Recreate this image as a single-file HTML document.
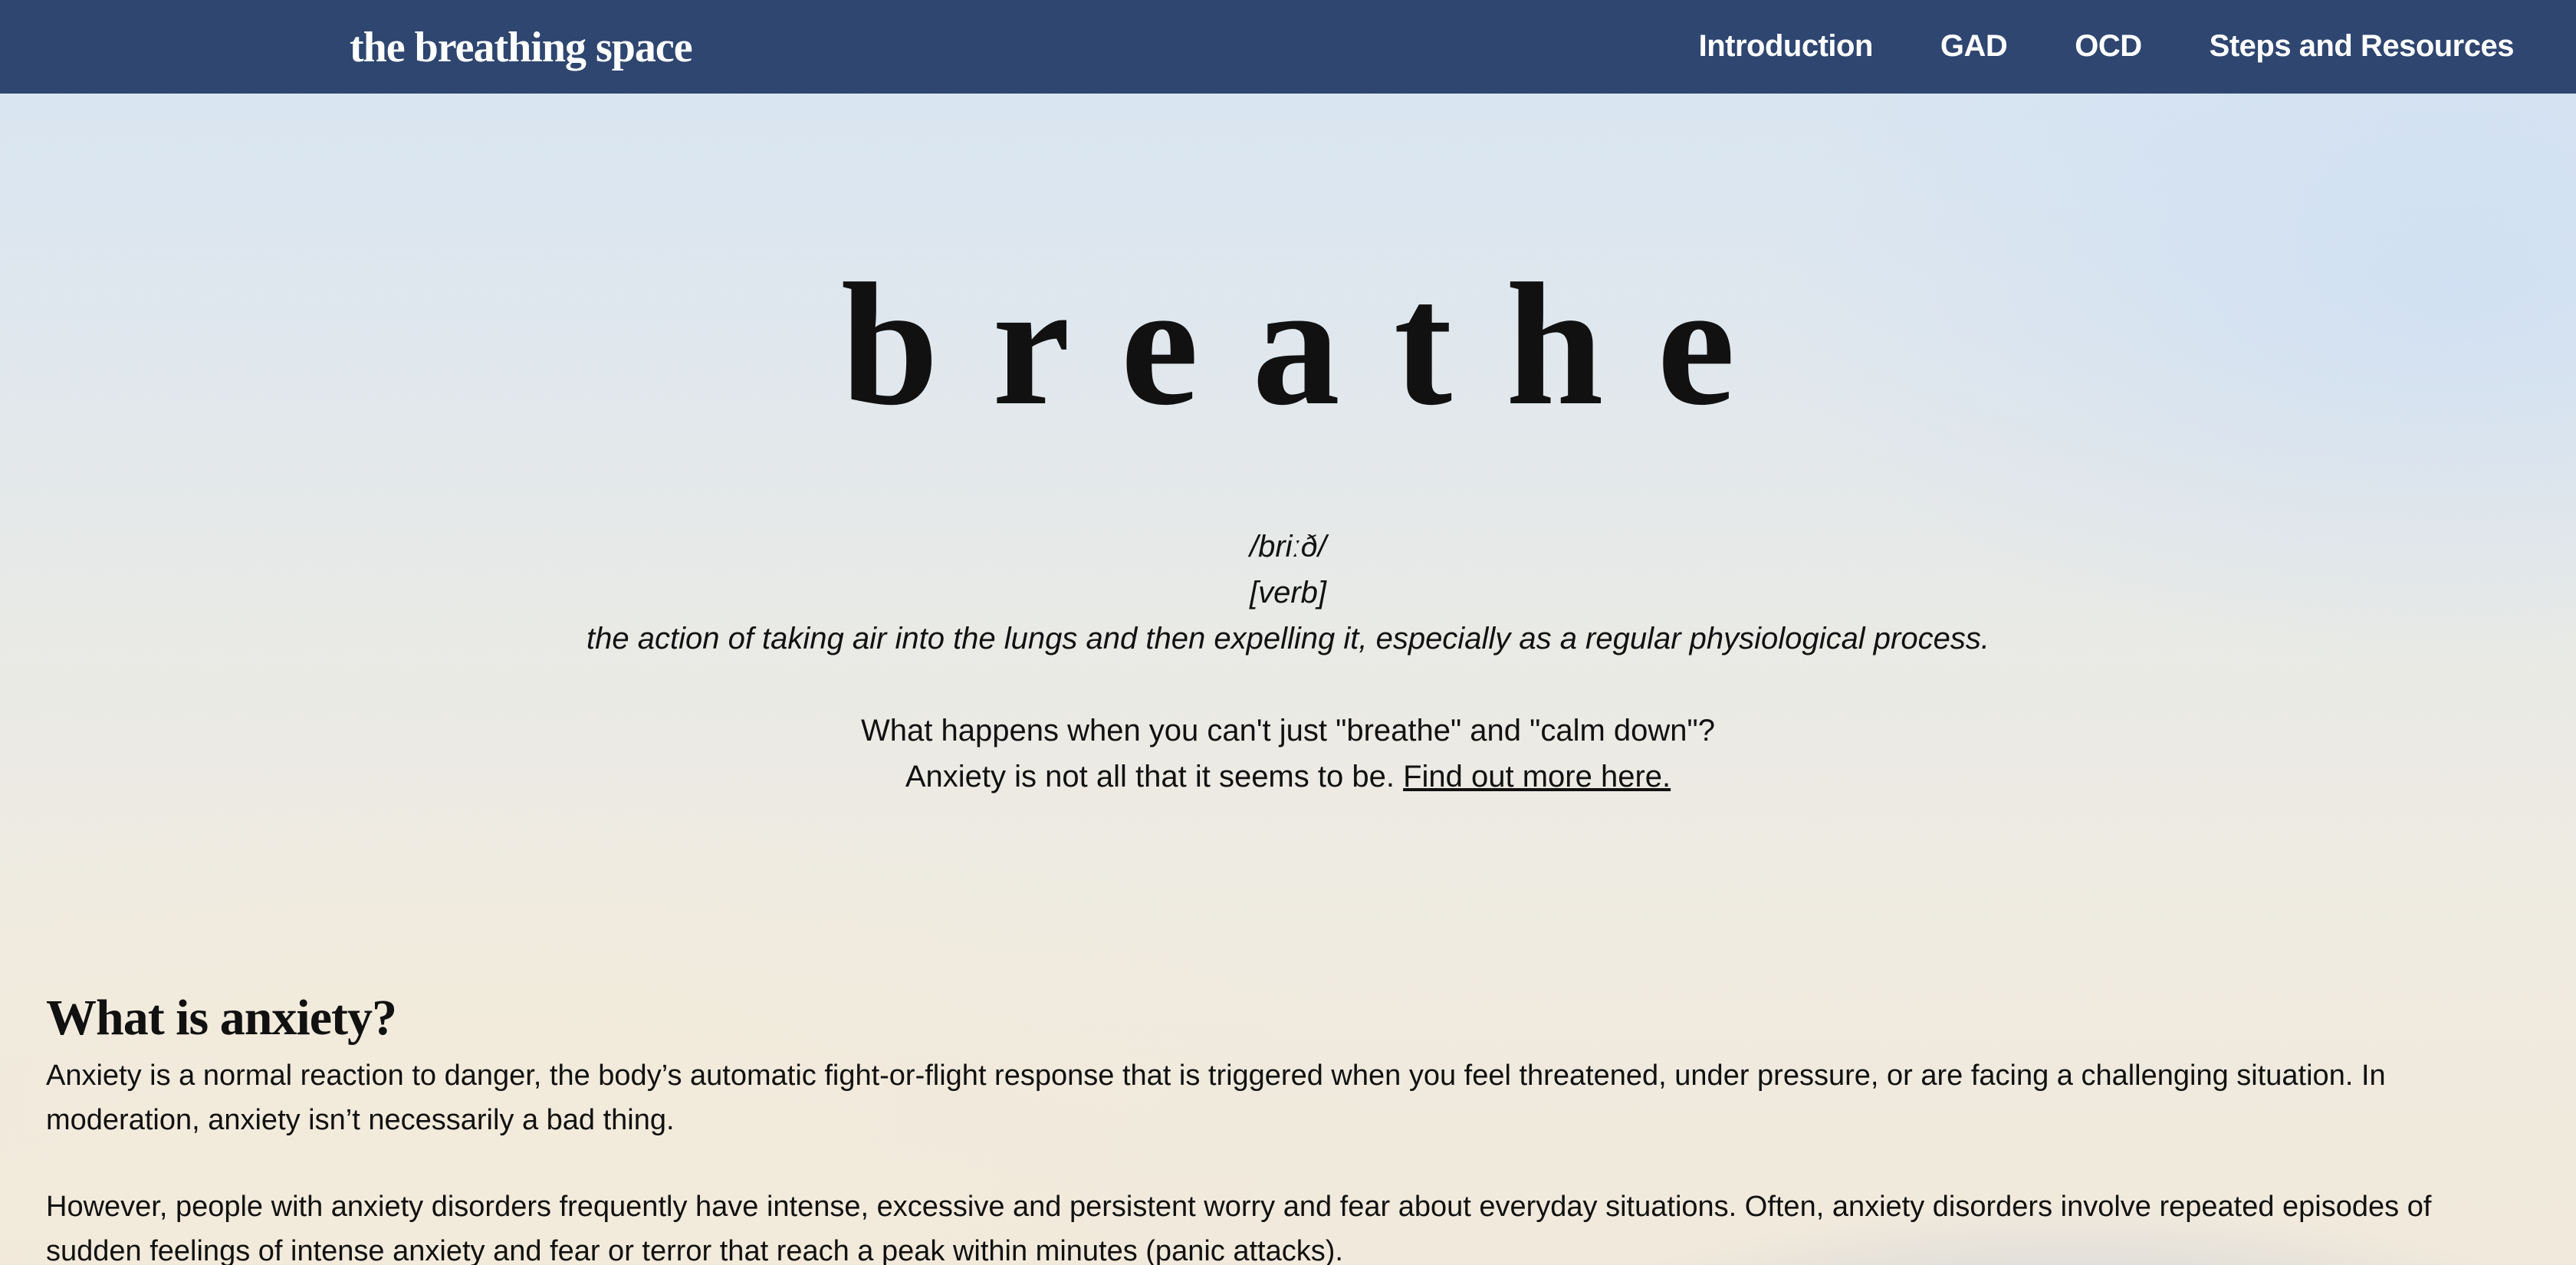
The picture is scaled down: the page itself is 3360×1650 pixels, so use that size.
<!DOCTYPE html>
<html><head><meta charset="utf-8"><style>
*{margin:0;padding:0;box-sizing:border-box}
html,body{width:3360px;height:1650px;overflow:hidden}
body{font-family:"Liberation Sans",sans-serif;color:#111;
background:linear-gradient(180deg,#d6e4f2 0%,#dfe7ee 25%,#e9eae6 50%,#efebe0 75%,#f1e9db 100%);position:relative}
.glow{position:absolute;left:0;top:122px;width:3360px;height:1528px;
background:radial-gradient(ellipse 900px 500px at 3200px 250px,rgba(200,220,245,.6),transparent),
radial-gradient(ellipse 700px 200px at 2700px 1650px,rgba(170,190,215,.55),transparent),
radial-gradient(ellipse 1200px 400px at 600px 1300px,rgba(245,235,215,.5),transparent)}
nav{position:absolute;left:0;top:0;width:3360px;height:122px;background:#2e4670;color:#fff}
.logo{position:absolute;left:456px;top:30px;font-family:"Liberation Serif",serif;font-weight:bold;font-size:56px;letter-spacing:-1px}
.links{position:absolute;right:81px;top:38px;font-weight:bold;font-size:40px;display:flex;gap:88px;letter-spacing:-0.5px}
.hero{position:absolute;left:0;width:3360px;text-align:center}
h1{position:absolute;left:0;width:3360px;top:284px;text-align:center;font-family:"Liberation Serif",serif;font-weight:bold;font-size:229px;letter-spacing:70px;line-height:330px;padding-left:70px}
.def{top:683px;font-style:italic;font-size:40px;line-height:60px}
.q{top:923px;font-size:40px;line-height:60px}
.q a{color:#111;text-decoration:underline}
h2{position:absolute;left:60px;top:1290px;font-family:"Liberation Serif",serif;font-weight:bold;font-size:66px;letter-spacing:-1px}
p{position:absolute;left:60px;width:3200px;font-size:38px;line-height:58px}
</style></head><body>
<div class="glow"></div>
<nav><div class="logo">the breathing space</div>
<div class="links"><span>Introduction</span><span>GAD</span><span>OCD</span><span>Steps and Resources</span></div></nav>
<h1>breathe</h1>
<div class="hero def">/briːð/<br>[verb]<br>the action of taking air into the lungs and then expelling it, especially as a regular physiological process.</div>
<div class="hero q">What happens when you can't just "breathe" and "calm down"?<br>Anxiety is not all that it seems to be. <a>Find out more here.</a></div>
<h2>What is anxiety?</h2>
<p style="top:1374px">Anxiety is a normal reaction to danger, the body’s automatic fight-or-flight response that is triggered when you feel threatened, under pressure, or are facing a challenging situation. In moderation, anxiety isn’t necessarily a bad thing.</p>
<p style="top:1545px">However, people with anxiety disorders frequently have intense, excessive and persistent worry and fear about everyday situations. Often, anxiety disorders involve repeated episodes of sudden feelings of intense anxiety and fear or terror that reach a peak within minutes (panic attacks).</p>
</body></html>
